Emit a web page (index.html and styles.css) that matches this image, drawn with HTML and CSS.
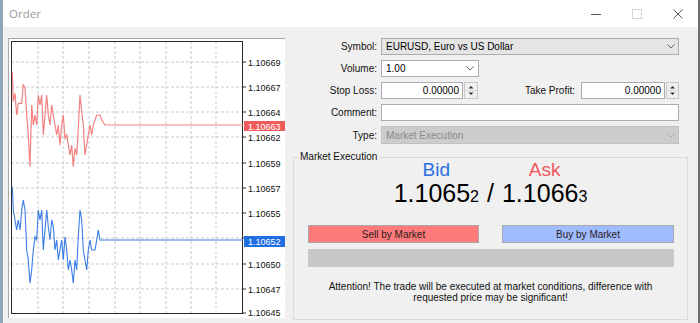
FILE: index.html
```html
<!doctype html>
<html>
  <head>
    <meta charset="utf-8">
    <title>Order</title>
    <link rel="stylesheet" href="styles.css">
  </head>
  <body>
    <div class="window">
      <header class="titlebar">
        <span class="title">Order</span>
        <div class="controls">
          <span class="ctl"><svg width="10" height="10" viewBox="0 0 10 10"><path d="M0 5.5h10" stroke="#555"/></svg></span>
          <span class="ctl"><svg width="10" height="10" viewBox="0 0 10 10"><rect x=".5" y=".5" width="9" height="9" fill="none" stroke="#d4d4d4"/></svg></span>
          <span class="ctl"><svg width="10" height="10" viewBox="0 0 10 10"><path d="M.5 .5l9 9M9.5 .5l-9 9" stroke="#555"/></svg></span>
        </div>
      </header>

      <div class="main">
        <div class="chart">
          <svg width="277" height="280" viewBox="8 38 277 280">
            <rect x="8" y="38" width="277" height="280" fill="#fff"/>
            <path d="M8 38.5h277M8.5 38v280" stroke="#a8a8a8"/>
            <g class="grid">
              <path d="M11 62h232M11 87h232M11 112h232M11 137h232M11 163h232M11 188h232M11 213h232M11 238h232M11 264h232M11 289h232"/>
              <path d="M38 41v273M63 41v273M89 41v273M115 41v273M140 41v273M166 41v273M191 41v273M216 41v273"/>
            </g>
            <rect x="11.5" y="41.5" width="231" height="272" fill="none" stroke="#2b2b2b"/>
            <path d="M243 62h3M243 87h3M243 112h3M243 137h3M243 163h3M243 188h3M243 213h3M243 238h3M243 264h3M243 289h3M243 313h3" stroke="#2b2b2b"/>
            <g class="axis">
              <text x="248" y="65.5">1.10669</text>
              <text x="248" y="90.5">1.10667</text>
              <text x="248" y="115.5">1.10664</text>
              <text x="248" y="140.5">1.10662</text>
              <text x="248" y="166.5">1.10659</text>
              <text x="248" y="191.5">1.10657</text>
              <text x="248" y="216.5">1.10655</text>
              <text x="248" y="267.5">1.10650</text>
              <text x="248" y="292.5">1.10647</text>
              <text x="248" y="316">1.10645</text>
            </g>
            <g transform="translate(7,37)" fill="none">
              <polyline class="ask-line" points="5.3,34.7 6.3,64.7 8,56.3 9.7,78 11.3,66.3 14.7,66.3 16.3,47.3 18,51.3 19.7,78 21.3,98 23,129.7 24.7,68 26.3,88 28,78 29.7,88 31.3,58 33,68 34.7,58 36.3,98 38,78 39.7,58 41.3,78 43,88 44.7,68 46.3,78 48,88 49.7,98 51.3,88 53,108 54.7,88 56.3,78 58,101.3 59.7,98 61.3,108 63,118 64.7,108 66.3,129.7 68,111.3 69.7,118 71.3,91.3 73,58 74.7,74.7 76.3,88 78,118 79.7,108 81.3,98 83,88 84.7,98 86.3,88 89.7,78 93,78 94.7,83 98,88 236,88"/>
              <polyline class="bid-line" points="5.3,149.7 6.3,173 8,183 9.7,193 11.3,183 13,193 14.7,173 16.3,163 18,173 19.7,213 21.3,223 23,246.3 24.7,233 26.3,213 28,199.7 29.7,203 31.3,173 33,183 34.7,173 36.3,213 38,193 39.7,173 41.3,189.7 43,203 44.7,183 46.3,189.7 48,213 49.7,203 51.3,223 53,213 54.7,203 56.3,223 58,199.7 59.7,213 61.3,233 63,223 64.7,233 66.3,246.3 68,223 69.7,233 71.3,199.7 73,173 74.7,183 76.3,213 78,223 79.7,233 81.3,213 83,203 84.7,213 88,213 89.7,203 91.3,193 93,203 236,203"/>
            </g>
            <rect x="244" y="121" width="41" height="10" fill="#f05c5c"/>
            <text class="tag" x="248" y="129.5">1.10663</text>
            <rect x="244" y="236" width="41" height="11" fill="#1f6fe3"/>
            <text class="tag" x="248" y="244.5">1.10652</text>
          </svg>
        </div>

        <div class="form">
          <div class="row">
            <label class="lbl">Symbol:</label>
            <div class="field select symbol">
              EURUSD, Euro vs US Dollar
              <svg class="chev" width="8" height="5" viewBox="0 0 8 5"><path d="M.5 .5L4 4 7.5 .5" fill="none" stroke="#666"/></svg>
            </div>
          </div>
          <div class="row">
            <label class="lbl">Volume:</label>
            <div class="field volume">
              1.00
              <svg class="chev" width="8" height="5" viewBox="0 0 8 5"><path d="M.5 .5L4 4 7.5 .5" fill="none" stroke="#666"/></svg>
            </div>
          </div>
          <div class="row">
            <label class="lbl">Stop Loss:</label>
            <div class="field num">0.00000</div>
            <svg class="spin" width="14" height="17" viewBox="0 0 14 17"><rect x=".5" y=".5" width="13" height="16" fill="#f0f0f0" stroke="#c8c8c8"/><path d="M1 8.5h12" stroke="#d8d8d8"/><path d="M4.5 6.5h5L7 4z" fill="#333"/><path d="M4.5 10.5h5L7 13z" fill="#333"/></svg>
            <div class="tp">
              <label class="tp-lbl">Take Profit:</label>
              <div class="field num">0.00000</div>
              <svg class="spin" width="13" height="17" viewBox="0 0 13 17"><rect x=".5" y=".5" width="12" height="16" fill="#f0f0f0" stroke="#c8c8c8"/><path d="M1 8.5h11" stroke="#d8d8d8"/><path d="M4 6.5h5L6.5 4z" fill="#333"/><path d="M4 10.5h5L6.5 13z" fill="#333"/></svg>
            </div>
          </div>
          <div class="row">
            <label class="lbl">Comment:</label>
            <div class="field comment"></div>
          </div>
          <div class="row row-type">
            <label class="lbl">Type:</label>
            <div class="field disabled">
              Market Execution
              <svg class="chev" width="8" height="5" viewBox="0 0 8 5"><path d="M.5 .5L4 4 7.5 .5" fill="none" stroke="#b0b0b0"/></svg>
            </div>
          </div>

          <fieldset class="exec">
            <legend>Market Execution</legend>
            <div class="quote">
              <span class="side bid">Bid</span>
              <span></span>
              <span class="side ask">Ask</span>
              <span class="price">1.1065<small>2</small></span>
              <span class="price slash">/</span>
              <span class="price">1.1066<small>3</small></span>
            </div>
            <div class="buttons">
              <div class="btn sell">Sell by Market</div>
              <div class="btn buy">Buy by Market</div>
            </div>
            <div class="bar"></div>
            <p class="notice">Attention! The trade will be executed at market conditions, difference with<br>requested price may be significant!</p>
          </fieldset>
        </div>
      </div>
    </div>
  </body>
</html>
```

FILE: styles.css
```css
html, body {
  margin: 0;
  padding: 0;
}

body {
  background: #f0f0f0;
  font-family: "Liberation Sans", Arial, sans-serif;
  font-size: 10px;
  color: #000;
}

.window {
  width: 700px;
  height: 323px;
  box-sizing: border-box;
  border-left: 3px solid #8ca7ba;
  border-right: 2px solid #6f6f6f;
  overflow: hidden;
}

/* title bar */
.titlebar {
  height: 27px;
  background: #fff;
  display: flex;
  align-items: center;
}
.title {
  font-family: "Open Sans", sans-serif;
  font-size: 11.5px;
  color: #9a9a9a;
  margin-left: 6px;
}
.controls {
  margin-left: auto;
  display: flex;
}
.ctl {
  width: 41px;
  height: 27px;
  display: flex;
  align-items: center;
  justify-content: center;
}

.main {
  display: flex;
  padding-top: 11px;
}

/* chart */
.chart {
  margin-left: 5px;
  width: 277px;
  height: 280px;
}
.chart svg {
  display: block;
}
.grid path {
  stroke: #c9c9c9;
  stroke-dasharray: 3 2;
  fill: none;
}
.axis text, .tag {
  font-family: "Liberation Sans", Arial, sans-serif;
  font-size: 9px;
  fill: #111;
}
.tag {
  fill: #fff;
}
.ask-line {
  stroke: #f28282;
  stroke-width: 1.2;
}
.bid-line {
  stroke: #3b7de6;
  stroke-width: 1.1;
}

/* order form */
.form {
  margin-left: 8px;
  width: 395px;
}
.row {
  display: flex;
  align-items: center;
  height: 17px;
  width: 386px;
  margin-top: 5px;
}
.row:first-child {
  margin-top: 0;
}
.lbl {
  width: 84px;
  text-align: right;
  margin-right: 4px;
  color: #111;
}
.field {
  height: 17px;
  box-sizing: border-box;
  border: 1px solid #abadb3;
  background: #fff;
  display: flex;
  align-items: center;
  padding: 0 3px 0 4px;
}
.chev {
  margin-left: auto;
}
.select {
  background: #e5e5e5;
  border-color: #adadad;
}
.symbol, .comment, .disabled {
  width: 298px;
}
.volume {
  width: 98px;
  padding-right: 4px;
}
.num {
  width: 82px;
  justify-content: flex-end;
}
.tp .num {
  width: 84px;
}
.spin {
  display: block;
  margin-left: 1px;
}
.tp {
  margin-left: auto;
  display: flex;
  align-items: center;
}
.tp-lbl {
  margin-right: 6px;
  color: #111;
}
.row-type {
  height: 18px;
}
.disabled {
  height: 18px;
  background: #cccccc;
  border-color: #c2c2c2;
  color: #8a8a8a;
}

.exec {
  margin: 7px 0 0;
  padding: 0 0 16px;
  border: 1px solid #dadada;
  min-width: 0;
  width: 395px;
  box-sizing: border-box;
}
.exec legend {
  margin-left: 4px;
  padding: 0 2px;
  line-height: 12px;
  color: #111;
}

.quote {
  margin-top: -3px;
  display: grid;
  grid-template-columns: auto auto auto;
  justify-content: center;
  justify-items: center;
}
.side {
  font-size: 19px;
  line-height: 20px;
}
.bid {
  color: #2a6fe2;
}
.ask {
  color: #f2585c;
}
.price {
  font-size: 25px;
  line-height: 26px;
}
.price small {
  font-size: 16px;
}
.slash {
  padding: 0 8px;
}

.buttons {
  display: flex;
  gap: 23px;
  margin: 15px 0 0 14px;
}
.btn {
  height: 18px;
  box-sizing: border-box;
  border: 1px solid #a9a9a9;
  display: flex;
  align-items: center;
  justify-content: center;
  color: #2a1a1a;
}
.sell {
  width: 171px;
  background: #ff7b7b;
}
.buy {
  width: 172px;
  background: #9fbcff;
}
.bar {
  margin: 6px 0 0 14px;
  width: 366px;
  height: 18px;
  background: #c8c8c8;
}
.notice {
  margin: 14px 0 0;
  text-align: center;
  line-height: 11px;
  color: #111;
}
```
